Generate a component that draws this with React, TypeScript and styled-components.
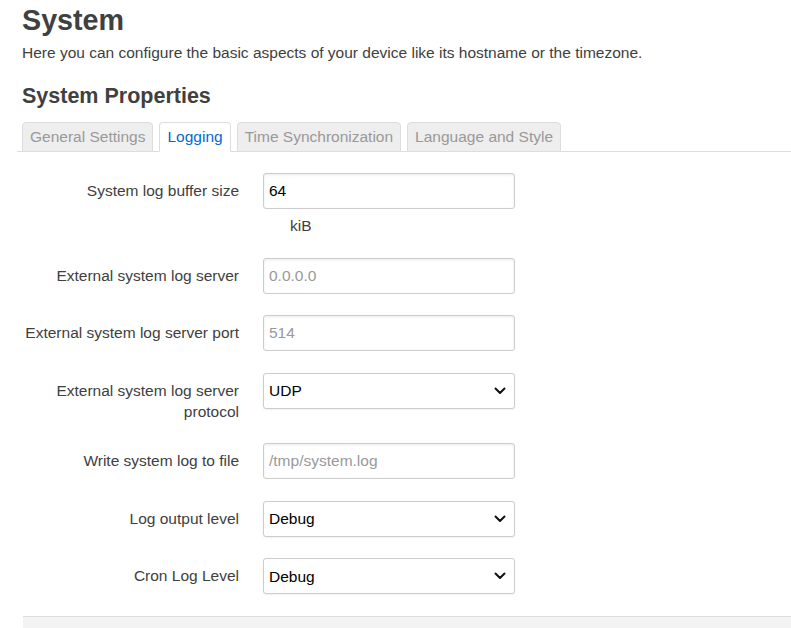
import React from "react";
import styled, { createGlobalStyle } from "styled-components";

const Global = createGlobalStyle`
  html, body { margin: 0; padding: 0; background: #fff; }
  body {
    font-family: "Liberation Sans", Arial, Helvetica, sans-serif;
    font-size: 15.5px;
    line-height: 21px;
    color: #404040;
  }
`;

const Page = styled.div`
  padding: 3px 0 0 22px;
  width: 791px;
  height: 628px;
  box-sizing: border-box;
  overflow: hidden;
`;

const Title = styled.h1`
  margin: 0;
  font-size: 28.7px;
  line-height: 34px;
  font-weight: bold;
  color: #404040;
`;

const Intro = styled.p`
  margin: 5px 0 0;
  font-size: 15.5px;
  line-height: 21px;
`;

const SectionTitle = styled.h2`
  margin: 20px 0 0;
  font-size: 21.5px;
  line-height: 26px;
  font-weight: bold;
  color: #404040;
`;

const Tabs = styled.ul`
  list-style: none;
  display: flex;
  gap: 6px;
  margin: 13px 0 0 -5px;
  padding: 0 0 0 5px;
  border-bottom: 1px solid #ddd;
`;

const Tab = styled.li<{ $active?: boolean }>`
  margin-bottom: -1px;
  padding: 3px 7px 4px 7px;
  border: 1px solid #ddd;
  border-bottom-color: ${(p) => (p.$active ? "#fff" : "#ddd")};
  border-radius: 4px 4px 0 0;
  background: ${(p) => (p.$active ? "#fff" : "#eee")};
  color: ${(p) => (p.$active ? "#0069d6" : "#999")};
  font-size: 15.5px;
  line-height: 21px;
  white-space: nowrap;
`;

const Form = styled.div`
  display: flex;
  flex-direction: column;
  gap: 21.5px;
  padding-top: 21px;
`;

const Row = styled.div`
  display: grid;
  grid-template-columns: 217px 252px;
  column-gap: 24px;
  align-items: start;
`;

const Label = styled.label`
  padding-top: 7px;
  text-align: right;
  line-height: 21px;
  color: #404040;
`;

const Field = styled.div`
  display: flex;
  flex-direction: column;
`;

const TextInput = styled.input`
  box-sizing: border-box;
  width: 252px;
  height: 36px;
  margin: 0;
  padding: 0 5px;
  border: 1px solid #ccc;
  border-radius: 3px;
  box-shadow: inset 0 1px 3px rgba(0, 0, 0, 0.08);
  font-family: "Liberation Sans", Arial, sans-serif;
  font-size: 15.5px;
  color: #000;
  background: #fff;
  outline: none;
  &::placeholder { color: #999; }
`;

const SelectBox = styled.div`
  box-sizing: border-box;
  width: 252px;
  height: 36px;
  display: flex;
  align-items: center;
  justify-content: space-between;
  padding: 0 8px 0 5px;
  border: 1px solid #ccc;
  border-radius: 3px;
  box-shadow: 0 1px 2px rgba(0, 0, 0, 0.06);
  font-size: 15.5px;
  color: #000;
  background: #fff;
`;

const Hint = styled.div`
  margin: 6px 0 0 27px;
  line-height: 21px;
  color: #404040;
`;

const Footer = styled.div`
  margin-top: 21.5px;
  margin-left: 1px;
  height: 40px;
  background: #f3f3f3;
  border-top: 1px solid #ddd;
`;

const Chevron = () => (
  <svg width="12" height="8" viewBox="0 0 12 8">
    <path d="M1.5 1.5 L6 6 L10.5 1.5" fill="none" stroke="#111" strokeWidth="2" strokeLinecap="round" strokeLinejoin="round" />
  </svg>
);

const Select = ({ value }: { value: string }) => (
  <SelectBox>
    <span>{value}</span>
    <Chevron />
  </SelectBox>
);

export default function App() {
  return (
    <>
      <Global />
      <Page>
        <Title>System</Title>
        <Intro>Here you can configure the basic aspects of your device like its hostname or the timezone.</Intro>
        <SectionTitle>System Properties</SectionTitle>
        <Tabs>
          <Tab>General Settings</Tab>
          <Tab $active>Logging</Tab>
          <Tab>Time Synchronization</Tab>
          <Tab>Language and Style</Tab>
        </Tabs>
        <Form>
          <Row>
            <Label>System log buffer size</Label>
            <Field>
              <TextInput defaultValue="64" />
              <Hint>kiB</Hint>
            </Field>
          </Row>
          <Row>
            <Label>External system log server</Label>
            <Field>
              <TextInput placeholder="0.0.0.0" />
            </Field>
          </Row>
          <Row>
            <Label>External system log server port</Label>
            <Field>
              <TextInput placeholder="514" />
            </Field>
          </Row>
          <Row>
            <Label>External system log server protocol</Label>
            <Field>
              <Select value="UDP" />
            </Field>
          </Row>
          <Row>
            <Label>Write system log to file</Label>
            <Field>
              <TextInput placeholder="/tmp/system.log" />
            </Field>
          </Row>
          <Row>
            <Label>Log output level</Label>
            <Field>
              <Select value="Debug" />
            </Field>
          </Row>
          <Row>
            <Label>Cron Log Level</Label>
            <Field>
              <Select value="Debug" />
            </Field>
          </Row>
        </Form>
        <Footer />
      </Page>
    </>
  );
}
